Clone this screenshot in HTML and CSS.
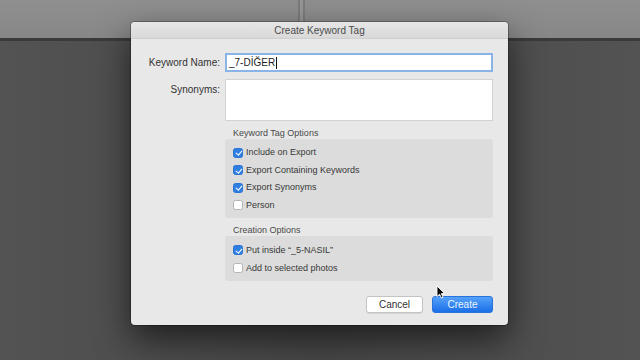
FILE: index.html
```html
<!doctype html>
<html lang="en">
<head>
	<meta charset="UTF-8">
	<title>Create Keyword Tag</title>

	<link rel="stylesheet" href="styles.css">
</head>
<body>

	<div class="tela">
		<!-- barra de cima -->
		<div class="topo">
			<div class="painel painel-esq"></div>
			<div class="divisor"></div>
			<div class="painel painel-dir"></div>
		</div>
		<div class="area-trabalho"></div>

		<!-- janela -->
		<div class="dialogo">
			<div class="titulo">Create Keyword Tag</div>
			<div class="corpo">
				<div class="form">
					<label class="rotulo">Keyword Name:</label>
					<div class="campo campo-foco"><span class="valor">_7-DİĞER</span><span class="caret"></span></div>

					<label class="rotulo rotulo-topo">Synonyms:</label>
					<div class="campo campo-area"></div>

					<div class="secao">
						<div class="secao-titulo">Keyword Tag Options</div>
						<div class="grupo">
							<div class="opcao"><span class="check marcado"></span>Include on Export</div>
							<div class="opcao"><span class="check marcado"></span>Export Containing Keywords</div>
							<div class="opcao"><span class="check marcado"></span>Export Synonyms</div>
							<div class="opcao"><span class="check"></span>Person</div>
						</div>
					</div>

					<div class="secao">
						<div class="secao-titulo">Creation Options</div>
						<div class="grupo grupo-criacao">
							<div class="opcao"><span class="check marcado"></span>Put inside “_5-NASIL”</div>
							<div class="opcao"><span class="check"></span>Add to selected photos</div>
						</div>
					</div>
				</div>

				<div class="botoes">
					<button class="botao botao-cancelar">Cancel</button>
					<button class="botao botao-criar">Create</button>
				</div>
			</div>
		</div>

		<!-- ponteiro do mouse -->
		<svg class="cursor" width="10" height="14" viewBox="0 0 10 14">
			<path d="M1 1 L1 11.5 L3.6 9.2 L5.4 13 L7 12.3 L5.3 8.6 L8.6 8.6 Z" fill="#000" stroke="#fff" stroke-width="0.9" stroke-linejoin="round"/>
		</svg>
	</div>

</body>
</html>
```

FILE: styles.css
```css
* {margin: 0; padding: 0; box-sizing: border-box;}
body {font: normal 10px/1.2 "Liberation Sans", Arial, sans-serif; background: #4b4b4b; overflow: hidden;}

.tela {width: 640px; height: 360px; position: relative; display: flex; flex-direction: column; background: #4b4b4b;}
.topo {height: 41px; display: flex; border-bottom: 3px solid #3a3a3a;}
.topo .painel {flex: 1; background: linear-gradient(#8f8f8f, #878787);}
.topo .painel-esq {flex: 0 0 298px;}
.topo .divisor {width: 7px; background: #959595; border-left: 2px solid #7b7b7b; border-right: 2px solid #7b7b7b;}
.area-trabalho {flex: 1; background: linear-gradient(90deg, #535353, #474747 50%, #535353);}

.dialogo {position: absolute; left: 131px; top: 22px; width: 377px; height: 303px; background: #e8e8e8; border-radius: 4px; box-shadow: 0 0 0 1px rgba(0,0,0,0.25), 0 14px 34px rgba(0,0,0,0.6); display: flex; flex-direction: column; overflow: hidden;}
.dialogo .titulo {height: 17px; line-height: 17px; text-align: center; color: #4a4a4a; background: linear-gradient(#e6e6e6, #d9d9d9); border-bottom: 1px solid #cfcfcf;}
.dialogo .corpo {flex: 1; padding: 14px 15px 13px 14px; display: flex; flex-direction: column;}

.form {display: grid; grid-template-columns: 76px 268px; column-gap: 4px; row-gap: 7px;}
.form .rotulo {text-align: right; color: #333; line-height: 19px; white-space: nowrap; padding-right: 1px;}
.form .rotulo-topo {line-height: 12px; padding-top: 5px;}
.form .campo {height: 19px; background: #fff; border: 1px solid #c9c9c9;}
.form .campo-foco {border: 2px solid #8ab4e8; padding: 0 2px; display: flex; align-items: center; color: #1e1e1e; line-height: 15px;}
.form .campo-foco .caret {width: 1px; height: 12px; background: #111; margin-left: 1px;}
.form .campo-area {height: 42px; border-color: #d2d2d2;}

.secao {grid-column: 2; display: flex; flex-direction: column;}
.secao .secao-titulo {font-size: 9px; color: #4a4a4a; padding-left: 8px; height: 11px; line-height: 11px;}
.secao .grupo {background: #dcdcdc; border-radius: 3px; padding: 5px 8px 4px; height: 79px;}
.secao .grupo-criacao {height: 45px;}
.secao .opcao {height: 17.5px; display: flex; align-items: center; font-size: 9px; color: #383838;}
.secao .grupo-criacao .opcao {height: 18px;}

.check {width: 10px; height: 10px; margin-right: 3px; border-radius: 2.5px; background: #fff; border: 1px solid #b4b4b4; position: relative; flex: none;}
.check.marcado {background: #2f7fe3; border-color: #2a74d4;}
.check.marcado:after {content: ""; position: absolute; left: 2.5px; top: 0.5px; width: 2.5px; height: 5px; border: solid #fff; border-width: 0 1.5px 1.5px 0; transform: rotate(40deg);}

.botoes {margin-top: 15px; display: flex; justify-content: flex-end; gap: 9px;}
.botao {height: 17px; font: normal 10px/15px "Liberation Sans", Arial, sans-serif; border-radius: 3px; border: 1px solid #c3c3c3;}
.botao-cancelar {width: 57px; background: #fff; color: #333; box-shadow: 0 1px 0 rgba(0,0,0,0.08);}
.botao-criar {width: 61px; background: linear-gradient(#55a2fb, #1b6fe7); border-color: #2a73dc; color: #eef5ff;}

.cursor {position: absolute; left: 436px; top: 285px;}
```
